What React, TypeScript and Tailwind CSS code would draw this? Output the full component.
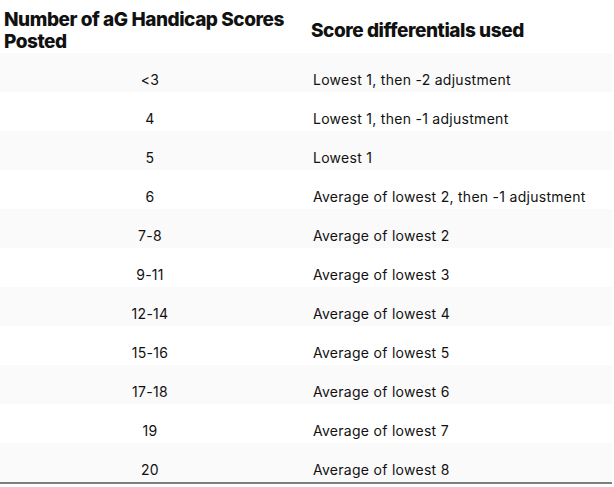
import React from "react";

const rows: [string, string][] = [
  ["<3", "Lowest 1, then -2 adjustment"],
  ["4", "Lowest 1, then -1 adjustment"],
  ["5", "Lowest 1"],
  ["6", "Average of lowest 2, then -1 adjustment"],
  ["7-8", "Average of lowest 2"],
  ["9-11", "Average of lowest 3"],
  ["12-14", "Average of lowest 4"],
  ["15-16", "Average of lowest 5"],
  ["17-18", "Average of lowest 6"],
  ["19", "Average of lowest 7"],
  ["20", "Average of lowest 8"],
];

export default function App() {
  return (
    <div className="w-[614px] h-[487px] bg-white text-[#111] font-['Inter','Liberation_Sans',sans-serif]">
      <div className="w-[612px] border-b-2 border-[#7f7f7f]">
        <div className="grid grid-cols-[300px_312px] h-[53px] pt-[9px] items-center font-extrabold text-[19px] leading-[22px] tracking-[-0.45px] whitespace-nowrap">
          <div className="pl-[4px]">
            Number of aG Handicap Scores
            <br />
            Posted
          </div>
          <div className="pl-[11px]">Score differentials used</div>
        </div>
        {rows.map(([n, d], i) => (
          <div
            key={n}
            className={`grid grid-cols-[300px_312px] h-[39px] pt-[17px] text-[14px] leading-[20px] tracking-[0.28px] whitespace-nowrap ${
              i % 2 === 0 ? "bg-[#fafafa]" : "bg-white"
            }`}
          >
            <div className="text-center">{n}</div>
            <div className="pl-[13px]">{d}</div>
          </div>
        ))}
      </div>
    </div>
  );
}
